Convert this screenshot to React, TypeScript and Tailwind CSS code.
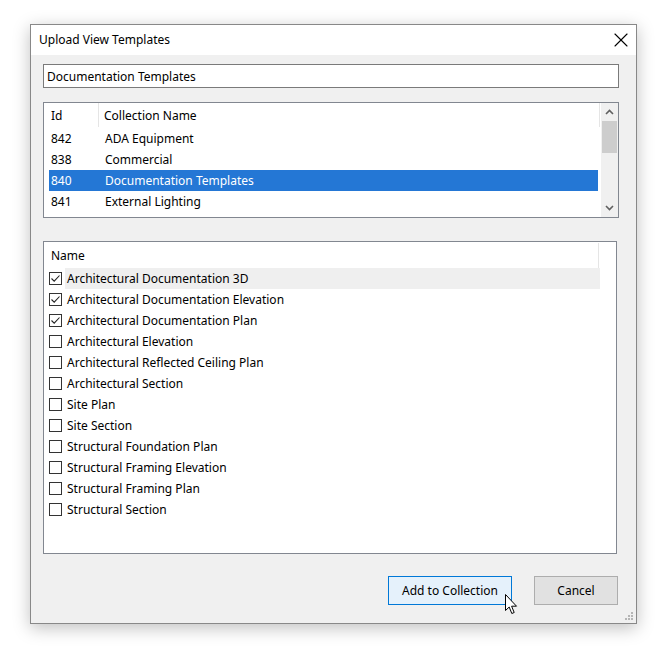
import { X } from "lucide-react";

const collections = [
  { id: "842", name: "ADA Equipment" },
  { id: "838", name: "Commercial" },
  { id: "840", name: "Documentation Templates", selected: true },
  { id: "841", name: "External Lighting" },
];

const templates = [
  { name: "Architectural Documentation 3D", checked: true, hover: true },
  { name: "Architectural Documentation Elevation", checked: true },
  { name: "Architectural Documentation Plan", checked: true },
  { name: "Architectural Elevation" },
  { name: "Architectural Reflected Ceiling Plan" },
  { name: "Architectural Section" },
  { name: "Site Plan" },
  { name: "Site Section" },
  { name: "Structural Foundation Plan" },
  { name: "Structural Framing Elevation" },
  { name: "Structural Framing Plan" },
  { name: "Structural Section" },
];

function Checkbox({ checked }: { checked?: boolean }) {
  return (
    <div className="w-[13px] h-[13px] border border-[#333] bg-white flex items-center justify-center shrink-0">
      {checked && (
        <svg width="11" height="11" viewBox="0 0 11 11" fill="none">
          <path d="M1.5 5.5 L4.2 8.2 L9.5 2.5" stroke="#222" strokeWidth="1.1" />
        </svg>
      )}
    </div>
  );
}

function ScrollBar() {
  return (
    <div className="w-[17px] h-full bg-[#f0f0f0] flex flex-col items-center">
      <div className="h-[18px] w-full flex items-center justify-center">
        <svg width="9" height="6" viewBox="0 0 9 6">
          <path d="M1 5 L4.5 1.5 L8 5" stroke="#606060" strokeWidth="1.6" fill="none" />
        </svg>
      </div>
      <div className="w-[15px] h-[32px] bg-[#cdcdcd]" />
      <div className="flex-1" />
      <div className="h-[18px] w-full flex items-center justify-center">
        <svg width="9" height="6" viewBox="0 0 9 6">
          <path d="M1 1 L4.5 4.5 L8 1" stroke="#606060" strokeWidth="1.6" fill="none" />
        </svg>
      </div>
    </div>
  );
}

function Cursor() {
  return (
    <svg
      className="absolute left-[117px] top-[18px]"
      width="14"
      height="21"
      viewBox="0 0 14 21"
    >
      <path
        d="M0.5 0.5 L0.5 16.5 L4.2 13 L6.8 19.5 L9.2 18.5 L6.6 12.2 L11.5 12.2 Z"
        fill="#fff"
        stroke="#000"
        strokeWidth="1"
        strokeLinejoin="round"
      />
    </svg>
  );
}

export default function App() {
  return (
    <div
      className="w-[671px] h-[646px] bg-white pl-[30px] pt-[24px] text-[12px] text-black"
      style={{ fontFamily: "'Noto Sans', 'Liberation Sans', sans-serif" }}
    >
      <div className="w-[607px] h-[600px] border border-[#888] bg-[#f0f0f0] shadow-[0_4px_16px_rgba(0,0,0,0.25)] flex flex-col relative">
        {/* title bar */}
        <div className="h-[30px] bg-white flex items-center justify-between pl-[8px] pr-[3px] shrink-0">
          <span>Upload View Templates</span>
          <X className="w-[24px] h-[24px]" strokeWidth={1.1} />
        </div>

        <div className="flex flex-col pl-[12px] pr-[17px] pt-[9px]">
          <div className="w-[576px] h-[24px] border border-[#7a7a7a] bg-white flex items-center pl-[3px] pt-[1px]">
            Documentation Templates
          </div>

          {/* collections list */}
          <div className="w-[576px] h-[116px] mt-[14px] border border-[#828790] bg-white flex">
            <div className="flex-1 flex flex-col pl-[5px]">
              <div className="h-[25px] flex items-start">
                <div className="w-[50px] h-[24px] flex items-center pl-[2px] pt-[2px] border-r border-[#e5e5e5]">Id</div>
                <div className="flex-1 h-[24px] flex items-center pl-[5px] pt-[2px] border-r border-[#e5e5e5] mr-[1px]">
                  Collection Name
                </div>
              </div>
              {collections.map((c) => (
                <div
                  key={c.id}
                  className={`h-[21px] flex items-center pt-[1px] mr-[3px] ${c.selected ? "bg-[#2477d5] text-white" : ""}`}
                >
                  <div className="w-[50px] pl-[2px]">{c.id}</div>
                  <div className="pl-[6px]">{c.name}</div>
                </div>
              ))}
            </div>
            <ScrollBar />
          </div>

          {/* templates list */}
          <div className="w-[574px] h-[313px] mt-[23px] border border-[#828790] bg-white flex flex-col pl-[5px]">
            <div className="h-[25px] w-[550px] flex items-center pl-[2px] border-r border-[#e5e5e5] mt-[1px]">Name</div>
            {templates.map((t) => (
              <div key={t.name} className="h-[21px] flex items-center w-[551px]">
                <Checkbox checked={t.checked} />
                <div
                  className={`flex-1 h-full flex items-center pl-[2px] ml-[3px] ${t.hover ? "bg-[#efefef]" : ""}`}
                >
                  {t.name}
                </div>
              </div>
            ))}
          </div>

          {/* buttons */}
          <div className="flex justify-end gap-[22px] mt-[22px] pr-[1px]">
            <div className="relative">
              <button className="w-[124px] h-[29px] border border-[#0078d7] bg-[#e5f1fb]">
                Add to Collection
              </button>
              <Cursor />
            </div>
            <button className="w-[84px] h-[29px] border border-[#adadad] bg-[#e1e1e1]">Cancel</button>
          </div>
        </div>

        {/* resize grip */}
        <svg className="absolute right-[2px] bottom-[2px]" width="10" height="10" viewBox="0 0 10 10">
          <rect x="7" y="1" width="2" height="2" fill="#b5b5b5" />
          <rect x="4" y="4" width="2" height="2" fill="#b5b5b5" />
          <rect x="7" y="4" width="2" height="2" fill="#b5b5b5" />
          <rect x="1" y="7" width="2" height="2" fill="#b5b5b5" />
          <rect x="4" y="7" width="2" height="2" fill="#b5b5b5" />
          <rect x="7" y="7" width="2" height="2" fill="#b5b5b5" />
        </svg>
      </div>
    </div>
  );
}
